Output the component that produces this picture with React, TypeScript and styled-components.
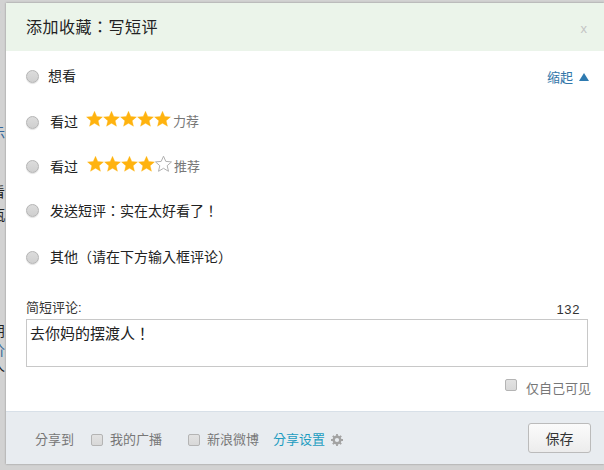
import React from "react"
import styled, { createGlobalStyle } from "styled-components"

// TC keeps the full-width punctuation centred, the way the reference shows it
const FONT = `"Liberation Sans", "Noto Sans CJK TC", "Noto Sans CJK SC", sans-serif`

const GlobalStyle = createGlobalStyle`
  html, body {
    margin: 0;
    padding: 0;
    background: #d2d2d2;
  }
  body {
    font-family: ${FONT};
  }
`

function StarIcon({ filled }: { filled: boolean }) {
  return (
    <svg width="17" height="16" viewBox="0 0 17 16">
      <path
        d="M8.5.2l2.3 5.2 5.7.5-4.3 3.8 1.3 5.6-5-3-5 3 1.3-5.6L.5 5.9l5.7-.5z"
        fill={filled ? "#ffb30f" : "#fff"}
        stroke={filled ? "#ffb30f" : "#b0b0b0"}
        strokeWidth={filled ? 0.3 : 1}
      />
    </svg>
  )
}

function GearIcon() {
  return (
    <GearWrap viewBox="0 0 12 12">
      <circle cx="6" cy="6" r="3.3" fill="none" stroke="#a3a3a3" strokeWidth="2.4" />
      <path
        d="M6 0v2.4M6 9.6V12M0 6h2.4M9.6 6H12M1.8 1.8l1.7 1.7M8.5 8.5l1.7 1.7M10.2 1.8L8.5 3.5M3.5 8.5l-1.7 1.7"
        stroke="#a3a3a3"
        strokeWidth="1.8"
      />
    </GearWrap>
  )
}

function Stars({ count, indent }: { count: number; indent: number }) {
  return (
    <StarRow $indent={indent}>
      {[0, 1, 2, 3, 4].map((i) => (
        <StarIcon key={i} filled={i < count} />
      ))}
    </StarRow>
  )
}

const leftovers = [
  { text: "B", top: 2, color: "#456" },
  { text: "示", top: 122, color: "#369" },
  { text: "看", top: 181, color: "#222" },
  { text: "瓶", top: 204, color: "#222" },
  { text: "朋", top: 320, color: "#222" },
  { text: "价", top: 339, color: "#369" },
  { text: "人", top: 355, color: "#222" },
  { text: ":", top: 386, color: "#369" },
  { text: ".", top: 405, color: "#222" },
]

export default function App() {
  return (
    <>
      <GlobalStyle />
      <Page>
        {leftovers.map((l) => (
          <Leftover key={l.top} $top={l.top} $color={l.color}>
            {l.text}
          </Leftover>
        ))}
        <Dialog>
          <Header>
            <Title>{"添加收藏\uFF1A写短评"}</Title>
            <Close>x</Close>
          </Header>
          <Body>
            <FirstRow>
              <RadioRow $height={46}>
                <Radio />
                <Label $indent={9}>想看</Label>
              </RadioRow>
              <Collapse>
                缩起
                <Arrow />
              </Collapse>
            </FirstRow>
            <RadioRow $height={46}>
              <Radio />
              <Label $indent={11}>看过</Label>
              <Stars count={5} indent={8} />
              <Hint $indent={2}>力荐</Hint>
            </RadioRow>
            <RadioRow $height={43}>
              <Radio />
              <Label $indent={11}>看过</Label>
              <Stars count={4} indent={9} />
              <Hint $indent={2}>推荐</Hint>
            </RadioRow>
            <RadioRow $height={45}>
              <Radio />
              <Label $indent={11}>{"发送短评\uFF1A实在太好看了\uFF01"}</Label>
            </RadioRow>
            <RadioRow $height={48}>
              <Radio />
              <Label $indent={11}>{"其他\uFF08请在下方输入框评论\uFF09"}</Label>
            </RadioRow>
            <CommentHead>
              <span>简短评论:</span>
              <Count>132</Count>
            </CommentHead>
            <CommentBox defaultValue={"去你妈的摆渡人\uFF01"} />
            <Private>
              <PrivateBox />
              <PrivateLabel>仅自己可见</PrivateLabel>
            </Private>
          </Body>
          <Footer>
            <ShareLabel>分享到</ShareLabel>
            <ShareBox />
            <ShareOption>我的广播</ShareOption>
            <ShareBox />
            <ShareOption>新浪微博</ShareOption>
            <ShareLink>分享设置</ShareLink>
            <GearIcon />
            <SaveButton>保存</SaveButton>
          </Footer>
        </Dialog>
      </Page>
    </>
  )
}

const Page = styled.div`
  position: relative;
  width: 604px;
  height: 470px;
  box-sizing: border-box;
  padding: 3px 0 0 6px;
  overflow: hidden;
  background: #d2d2d2;
`

const Leftover = styled.span<{ $top: number; $color: string }>`
  position: absolute;
  left: -9px;
  top: ${({ $top }) => $top}px;
  font-size: 14px;
  color: ${({ $color }) => $color};
`

const Dialog = styled.div`
  position: relative;
  width: 598px;
  height: 461px;
  display: flex;
  flex-direction: column;
  background: #fff;
  box-shadow: 0 0 2px rgba(0, 0, 0, 0.35);
`

const Header = styled.div`
  height: 48px;
  flex: none;
  display: flex;
  align-items: center;
  justify-content: space-between;
  padding: 0 17px 0 20px;
  background: #ebf4ea;
`

const Title = styled.h2`
  margin: 0 0 2px;
  font-size: 16px;
  font-weight: normal;
  letter-spacing: 0.5px;
  color: #222;
`

const Close = styled.span`
  font-size: 13px;
  margin-top: 2px;
  color: #c4c4c4;
`

const Body = styled.div`
  flex: 1;
  padding: 2px 13px 0 20px;
`

const FirstRow = styled.div`
  display: flex;
  justify-content: space-between;
  align-items: flex-start;
`

const RadioRow = styled.div<{ $height: number }>`
  height: ${({ $height }) => $height}px;
  display: flex;
  align-items: center;
`

const Radio = styled.span`
  flex: none;
  width: 11px;
  height: 11px;
  border: 1px solid #b4b4b4;
  border-radius: 50%;
  background: linear-gradient(#dcdcdc, #cfcfcf);
  box-shadow: 0 1px 1px rgba(0, 0, 0, 0.12);
`

const Label = styled.span<{ $indent: number }>`
  margin-left: ${({ $indent }) => $indent}px;
  margin-bottom: 2px;
  font-size: 14px;
  color: #222;
`

const StarRow = styled.span<{ $indent: number }>`
  display: flex;
  margin-left: ${({ $indent }) => $indent}px;
  margin-bottom: 6px;
`

const Hint = styled.span<{ $indent: number }>`
  margin-left: ${({ $indent }) => $indent}px;
  margin-bottom: 3px;
  font-size: 13px;
  color: #777;
`

const Collapse = styled.span`
  display: flex;
  align-items: center;
  gap: 6px;
  margin-top: 14px;
  margin-right: 2px;
  font-size: 13px;
  color: #3377aa;
`

const Arrow = styled.span`
  width: 0;
  height: 0;
  border-left: 5px solid transparent;
  border-right: 5px solid transparent;
  border-bottom: 8px solid #2e7ab0;
`

const CommentHead = styled.div`
  margin-top: 20px;
  height: 18px;
  display: flex;
  justify-content: space-between;
  align-items: flex-start;
  line-height: 14px;
  font-size: 13px;
  color: #333;
`

const Count = styled.span`
  margin-top: 2px;
  margin-right: 11px;
  font-size: 13px;
  letter-spacing: 0.6px;
`

const CommentBox = styled.textarea`
  display: block;
  width: 562px;
  height: 48px;
  box-sizing: border-box;
  margin: 0;
  padding: 4px 3px;
  border: 1px solid #c8c8c8;
  border-radius: 0;
  outline: none;
  resize: none;
  font-family: ${FONT};
  font-size: 15px;
  line-height: 20px;
  color: #222;
`

const Private = styled.div`
  display: flex;
  align-items: center;
  justify-content: flex-end;
  margin-top: 9px;
`

const Checkbox = styled.span`
  flex: none;
  width: 10px;
  height: 10px;
  border: 1px solid #b4b4b4;
  border-radius: 2px;
  background: linear-gradient(#e2e2e2, #d8d8d8);
`

const PrivateBox = styled(Checkbox)`
  margin-bottom: 4px;
`

const ShareBox = styled(Checkbox)`
  margin-top: 4px;
`

const PrivateLabel = styled.span`
  margin-left: 9px;
  margin-top: 2px;
  font-size: 13px;
  color: #777;
`

const Footer = styled.div`
  height: 53px;
  flex: none;
  display: flex;
  align-items: center;
  box-sizing: border-box;
  padding: 0 13px 0 29px;
  border-top: 1px solid #d8e0e8;
  background: #e8ecf0;
`

const ShareLabel = styled.span`
  margin-right: 17px;
  font-size: 13px;
  color: #777;
`

const ShareOption = styled.span`
  margin-left: 7px;
  margin-right: 26px;
  font-size: 13px;
  color: #777;
`

const ShareLink = styled.span`
  margin-left: -12px;
  margin-right: 6px;
  font-size: 13px;
  color: #1d9cc0;
`

const GearWrap = styled.svg`
  flex: none;
  width: 12px;
  height: 12px;
  margin-top: 4px;
`

const SaveButton = styled.button`
  margin-left: auto;
  width: 63px;
  height: 30px;
  padding: 0;
  border: 1px solid #bbb;
  border-radius: 3px;
  background: linear-gradient(#fbfbfb, #ececec);
  font-family: ${FONT};
  font-size: 14px;
  color: #333;
`
